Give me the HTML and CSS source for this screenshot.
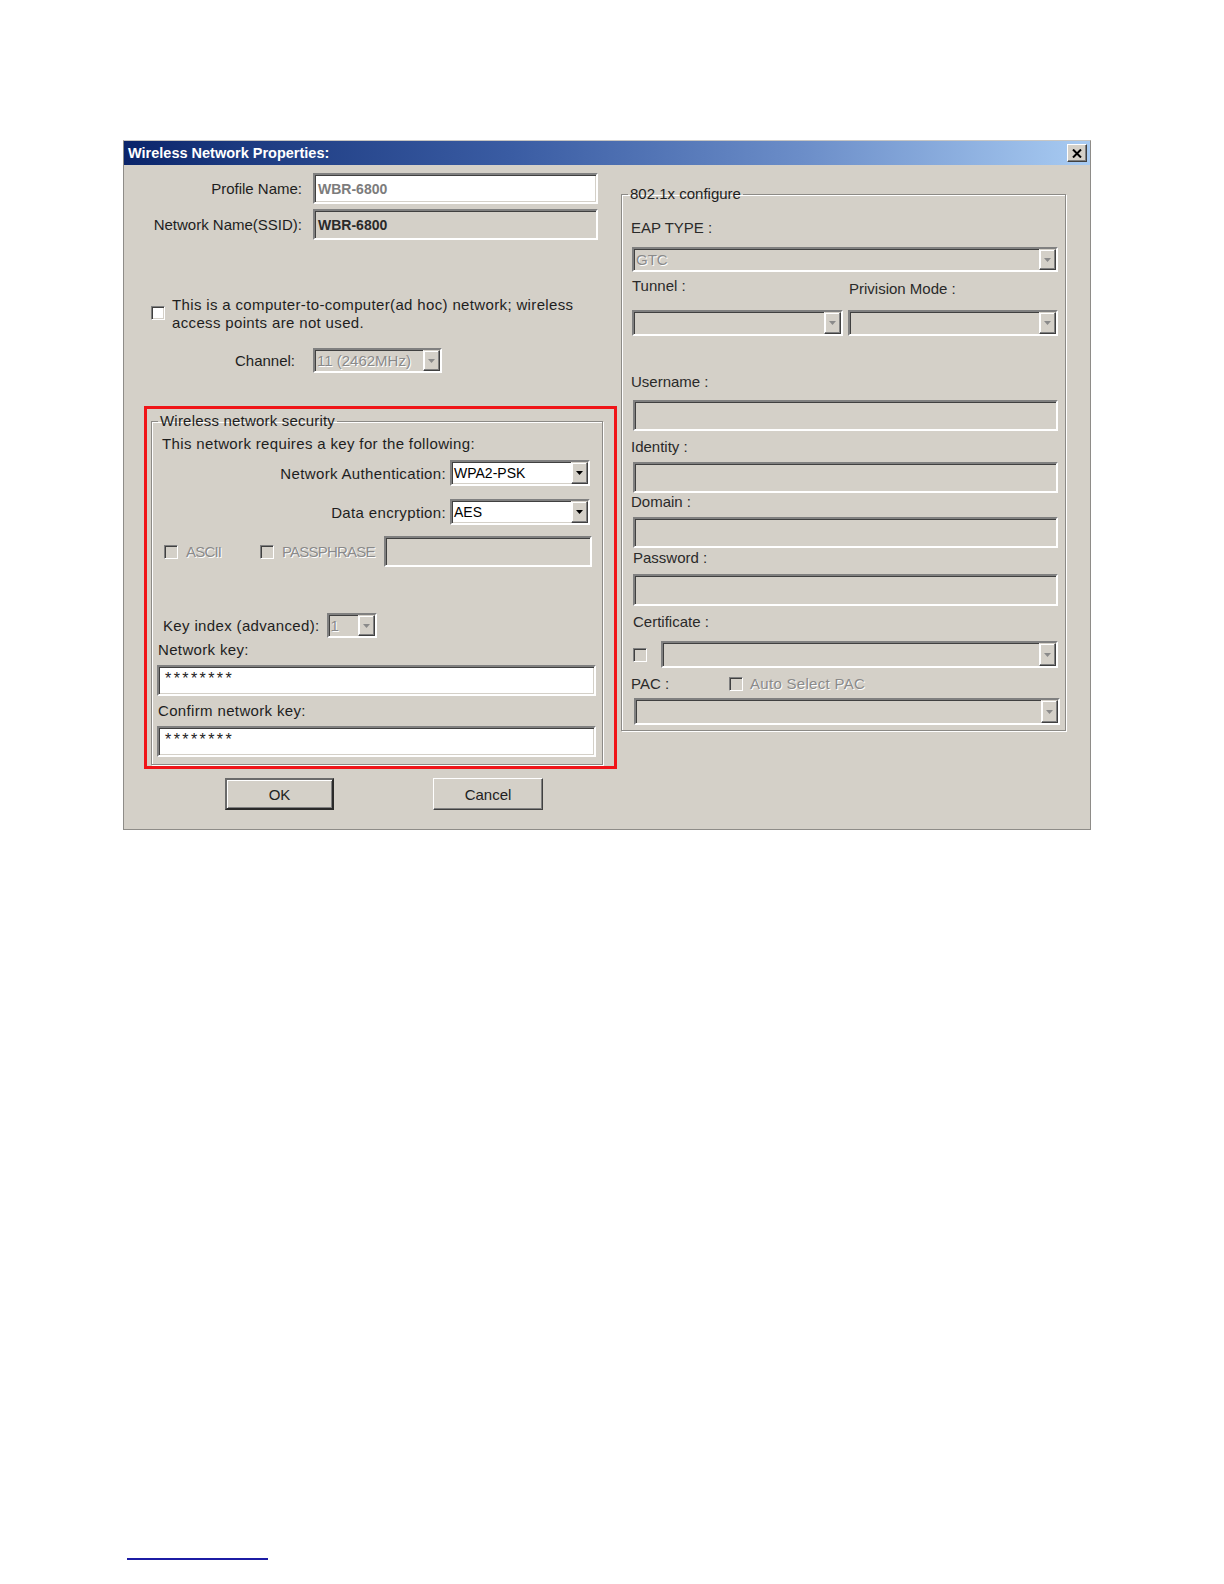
FILE: index.html
```
<!DOCTYPE html>
<html>
<head>
<meta charset="utf-8">
<title>Wireless Network Properties</title>
<link rel="stylesheet" href="styles.css">
</head>
<body>
<div class="dialog">
  <div class="titlebar">
    <span class="title">Wireless Network Properties:</span>
    <span class="close"><svg width="10" height="9" viewBox="0 0 10 9"><path d="M1 0.5 L9 8.5 M9 0.5 L1 8.5" stroke="#000" stroke-width="2"/></svg></span>
  </div>
  <div class="body">
    <div class="left">
      <div class="row row-profile">
        <span class="lbl">Profile Name:</span>
        <div class="field sunken white wide val-light">WBR-6800</div>
      </div>
      <div class="row row-ssid">
        <span class="lbl">Network Name(SSID):</span>
        <div class="field sunken wide val-bold">WBR-6800</div>
      </div>
      <div class="adhoc">
        <span class="check white"></span>
        <span class="adhoc-text">This is a computer-to-computer(ad hoc) network; wireless<br>access points are not used.</span>
      </div>
      <div class="row row-channel">
        <span class="lbl lbl-channel">Channel:</span>
        <div class="select sunken channel-sel">
          <span class="sel-text dis">11 (2462MHz)</span>
          <span class="arrow"><svg width="7" height="4" viewBox="0 0 7 4"><path d="M0 0 H7 L3.5 4 Z" fill="#8a8a8a"/></svg></span>
        </div>
      </div>
      <div class="highlight">
        <fieldset class="group sec">
          <legend>Wireless network security</legend>
          <div class="req">This network requires a key for the following:</div>
          <div class="pick-row auth-row">
            <span>Network Authentication:</span>
            <div class="select sunken white pick-sel">
              <span class="sel-text">WPA2-PSK</span>
              <span class="arrow"><svg width="7" height="4" viewBox="0 0 7 4"><path d="M0 0 H7 L3.5 4 Z" fill="#000"/></svg></span>
            </div>
          </div>
          <div class="pick-row enc-row">
            <span>Data encryption:</span>
            <div class="select sunken white pick-sel">
              <span class="sel-text">AES</span>
              <span class="arrow"><svg width="7" height="4" viewBox="0 0 7 4"><path d="M0 0 H7 L3.5 4 Z" fill="#000"/></svg></span>
            </div>
          </div>
          <div class="pass-row">
            <span class="chk-item ascii"><span class="check"></span><span class="dis chk-lbl">ASCII</span></span>
            <span class="chk-item"><span class="check"></span><span class="dis chk-lbl">PASSPHRASE</span></span>
            <div class="field sunken pass-field"></div>
          </div>
          <div class="key-row">
            <span>Key index (advanced):</span>
            <div class="select sunken key-sel">
              <span class="sel-text dis">1</span>
              <span class="arrow"><svg width="7" height="4" viewBox="0 0 7 4"><path d="M0 0 H7 L3.5 4 Z" fill="#8a8a8a"/></svg></span>
            </div>
          </div>
          <div class="key-lbl">Network key:</div>
          <div class="field sunken white key-field">********</div>
          <div class="key-lbl">Confirm network key:</div>
          <div class="field sunken white key-field">********</div>
        </fieldset>
      </div>
      <div class="buttons">
        <div class="btn default">OK</div>
        <div class="btn cancel">Cancel</div>
      </div>
    </div>
    <div class="right">
      <fieldset class="group dot1x">
        <legend>802.1x configure</legend>
        <div class="r-lbl eap-lbl">EAP TYPE :</div>
        <div class="select sunken eap-sel">
          <span class="sel-text dis">GTC</span>
          <span class="arrow"><svg width="7" height="4" viewBox="0 0 7 4"><path d="M0 0 H7 L3.5 4 Z" fill="#8a8a8a"/></svg></span>
        </div>
        <div class="pair pair-lbl">
          <span class="r-lbl">Tunnel :</span>
          <span class="r-lbl prov">Privision Mode :</span>
        </div>
        <div class="pair pair-sel">
          <div class="select sunken"><span class="sel-text"></span><span class="arrow"><svg width="7" height="4" viewBox="0 0 7 4"><path d="M0 0 H7 L3.5 4 Z" fill="#8a8a8a"/></svg></span></div>
          <div class="select sunken"><span class="sel-text"></span><span class="arrow"><svg width="7" height="4" viewBox="0 0 7 4"><path d="M0 0 H7 L3.5 4 Z" fill="#8a8a8a"/></svg></span></div>
        </div>
        <div class="r-lbl user-lbl">Username :</div>
        <div class="field sunken r-field f-user"></div>
        <div class="r-lbl id-lbl">Identity :</div>
        <div class="field sunken r-field f-id"></div>
        <div class="r-lbl dom-lbl">Domain :</div>
        <div class="field sunken r-field f-dom"></div>
        <div class="r-lbl pw-lbl">Password :</div>
        <div class="field sunken r-field f-pw"></div>
        <div class="r-lbl cert-lbl">Certificate :</div>
        <div class="cert-row">
          <span class="check"></span>
          <div class="select sunken cert-sel"><span class="sel-text"></span><span class="arrow"><svg width="7" height="4" viewBox="0 0 7 4"><path d="M0 0 H7 L3.5 4 Z" fill="#8a8a8a"/></svg></span></div>
        </div>
        <div class="pac-row">
          <span class="r-lbl pac-lbl">PAC :</span>
          <span class="check"></span>
          <span class="dis pac-auto">Auto Select PAC</span>
        </div>
        <div class="select sunken pac-sel"><span class="sel-text"></span><span class="arrow"><svg width="7" height="4" viewBox="0 0 7 4"><path d="M0 0 H7 L3.5 4 Z" fill="#8a8a8a"/></svg></span></div>
      </fieldset>
    </div>
  </div>
</div>
<div class="footline"></div>
</body>
</html>
```

FILE: styles.css
```
* { box-sizing: border-box; }
html, body { margin: 0; padding: 0; background: #fff; }
body {
  font-family: "Liberation Sans", Arial, sans-serif;
  font-size: 15px;
  color: #1e1e1e;
  width: 1224px;
  height: 1584px;
  overflow: hidden;
}

.dialog {
  margin: 140px 0 0 123px;
  width: 968px;
  height: 690px;
  background: #d4d0c8;
  border: 1px solid #8e8c88;
  border-top-color: #c8c6c2;
  display: flex;
  flex-direction: column;
}

.titlebar {
  flex: none;
  height: 24px;
  background: linear-gradient(to right, #0a246a 0%, #1c3a80 12%, #3a5ca3 40%, #6b8dc8 70%, #a8cbf2 100%);
  display: flex;
  align-items: center;
  justify-content: space-between;
  padding: 0 3px 0 4px;
}
.title { color: #fff; font-weight: bold; font-size: 14.5px; }
.close {
  width: 20px; height: 18px;
  background: #d4d0c8;
  border: 1px solid;
  border-color: #fff #404040 #404040 #fff;
  box-shadow: inset -1px -1px 0 #808080;
  display: flex; align-items: center; justify-content: center;
}

.body { flex: 1; display: flex; }
.left { width: 497px; flex: none; }
.right { width: 445px; flex: none; }

/* generic controls */
.sunken {
  border: 2px solid;
  border-color: #808080 #fff #fff #808080;
  box-shadow: inset 1px 1px 0 #404040, inset -1px -1px 0 #d4d0c8;
  background: #d4d0c8;
}
.white { background: #fff; }
.check {
  display: inline-block;
  width: 14px; height: 14px;
  border: 1px solid;
  border-color: #808080 #fff #fff #808080;
  box-shadow: inset 1px 1px 0 #404040, inset -1px -1px 0 #d4d0c8;
  background: #d4d0c8;
  flex: none;
}
.check.white { background: #fff; }
.dis { color: #8a8a8a; text-shadow: 1px 1px 0 #fff; }

.select { display: flex; align-items: stretch; }
.sel-text { flex: 1; padding-left: 2px; display: flex; align-items: center; white-space: nowrap; overflow: hidden; }
.arrow {
  flex: none;
  width: 17px;
  background: #d4d0c8;
  border: 1px solid;
  border-color: #d4d0c8 #404040 #404040 #fff;
  box-shadow: inset -1px -1px 0 #808080, inset 1px 1px 0 #fff;
  display: flex; align-items: center; justify-content: center;
}

/* left column */
.row { display: flex; align-items: center; }
.lbl { width: 178px; text-align: right; flex: none; }
.row .field, .row .select { margin-left: 11px; }
.field { display: flex; align-items: center; padding-left: 3px; }
.wide { width: 285px; height: 31px; font-size: 14px; }
.row-profile { margin-top: 8px; }
.row-ssid { margin-top: 5px; }
.val-light { color: #7c7c7c; font-weight: bold; }
.val-bold { color: #2a2a2a; font-weight: bold; }

.adhoc { margin-top: 56px; padding-left: 27px; display: flex; align-items: flex-start; }
.adhoc .check { margin-top: 10px; }
.adhoc-text { margin-left: 7px; line-height: 18px; letter-spacing: 0.35px; }

.row-channel { margin-top: 16px; }
.lbl-channel { padding-right: 7px; }
.channel-sel { width: 129px; height: 25px; }

.highlight {
  margin: 33px 0 0 20px;
  width: 473px;
  height: 363px;
  border: 3px solid #f01418;
  padding: 3px 11px 0 4px;
}

.group {
  margin: 0;
  min-width: 0;
  border: 1px solid #8c8a86;
  box-shadow: inset 1px 1px 0 #fff, 1px 1px 0 #fff;
}
.group legend { padding: 0 2px; line-height: 18px; }

.sec { padding: 0 5px 7px 5px; letter-spacing: 0.35px; }
.sec legend { margin-left: 1px; letter-spacing: 0.2px; }
.req { margin: 5px 0 0 5px; line-height: 18px; }
.pick-row { display: flex; justify-content: flex-end; align-items: center; padding-right: 7px; }
.auth-row { margin-top: 7px; }
.enc-row { margin-top: 13px; }
.pick-sel { width: 140px; height: 26px; margin-left: 4px; letter-spacing: 0; }
.pick-sel .sel-text { font-size: 14px; color: #000; }

.pass-row { margin-top: 11px; height: 31px; display: flex; align-items: center; padding-left: 7px; }
.chk-item { display: flex; align-items: center; }
.chk-item.ascii { width: 96px; }
.chk-lbl { margin-left: 8px; letter-spacing: -0.8px; }
.pass-field { margin-left: auto; margin-right: 5px; width: 208px; height: 31px; }

.key-row { margin: 46px 0 0 6px; display: flex; align-items: center; }
.key-sel { width: 50px; height: 25px; margin-left: 7px; letter-spacing: 0; }
.key-lbl { margin: 3px 0 0 1px; line-height: 18px; }
.key-lbl + .key-field + .key-lbl { margin-top: 6px; }
.key-field {
  margin-top: 6px;
  height: 31px;
  width: 439px;
  align-items: flex-start;
  padding: 4px 0 0 6px;
  font-size: 16px;
  line-height: 16px;
  letter-spacing: 2.4px;
  color: #222;
}

.buttons { margin-top: 9px; padding-left: 101px; display: flex; }
.btn {
  width: 109px; height: 32px;
  display: flex; align-items: center; justify-content: center;
  background: #d4d0c8;
  border: 1px solid;
  border-color: #fff #404040 #404040 #fff;
  box-shadow: inset -1px -1px 0 #808080;
  color: #222;
}
.btn.default { border: 2px solid #2a2a2a; border-color: #6a6a6a #2a2a2a #2a2a2a #6a6a6a; box-shadow: inset 1px 1px 0 #fff, inset -1px -1px 0 #808080; }
.btn.cancel { margin-left: 99px; width: 110px; }

/* right column */
.dot1x { margin-top: 20px; width: 445px; padding: 0 7px 5px 9px; }
.dot1x legend { margin-left: -3px; }
.r-lbl { line-height: 18px; color: #2a2a2a; }
.eap-lbl { margin-top: 16px; }
.eap-sel { margin: 10px 0 0 1px; width: 426px; height: 25px; }
.pair { display: grid; grid-template-columns: 211px 210px; column-gap: 5px; margin-left: 1px; }
.pair-lbl { margin-top: 5px; }
.prov { padding-top: 3px; padding-left: 1px; }
.pair-sel { margin-top: 12px; height: 26px; }
.user-lbl { margin-top: 37px; }
.r-field { margin-left: 2px; width: 425px; height: 31px; }
.f-user { margin-top: 9px; }
.id-lbl { margin-top: 7px; }
.f-id { margin-top: 6px; }
.dom-lbl { margin-top: 0; }
.f-dom { margin-top: 6px; }
.pw-lbl { margin: 1px 0 0 2px; }
.f-pw { margin-top: 7px; height: 32px; }
.cert-lbl { margin: 7px 0 0 2px; }
.cert-row { margin-top: 10px; height: 27px; display: flex; align-items: center; padding-left: 2px; }
.cert-sel { margin-left: auto; width: 397px; height: 27px; }
.pac-row { margin-top: 7px; display: flex; align-items: center; }
.pac-lbl { width: 98px; }
.pac-auto { margin-left: 7px; line-height: 18px; letter-spacing: 0.3px; }
.pac-sel { margin: 5px -2px 0 3px; width: 426px; height: 27px; }

.footline {
  margin: 728px 0 0 127px;
  width: 141px;
  height: 2px;
  background: #1c1ca4;
}
```
